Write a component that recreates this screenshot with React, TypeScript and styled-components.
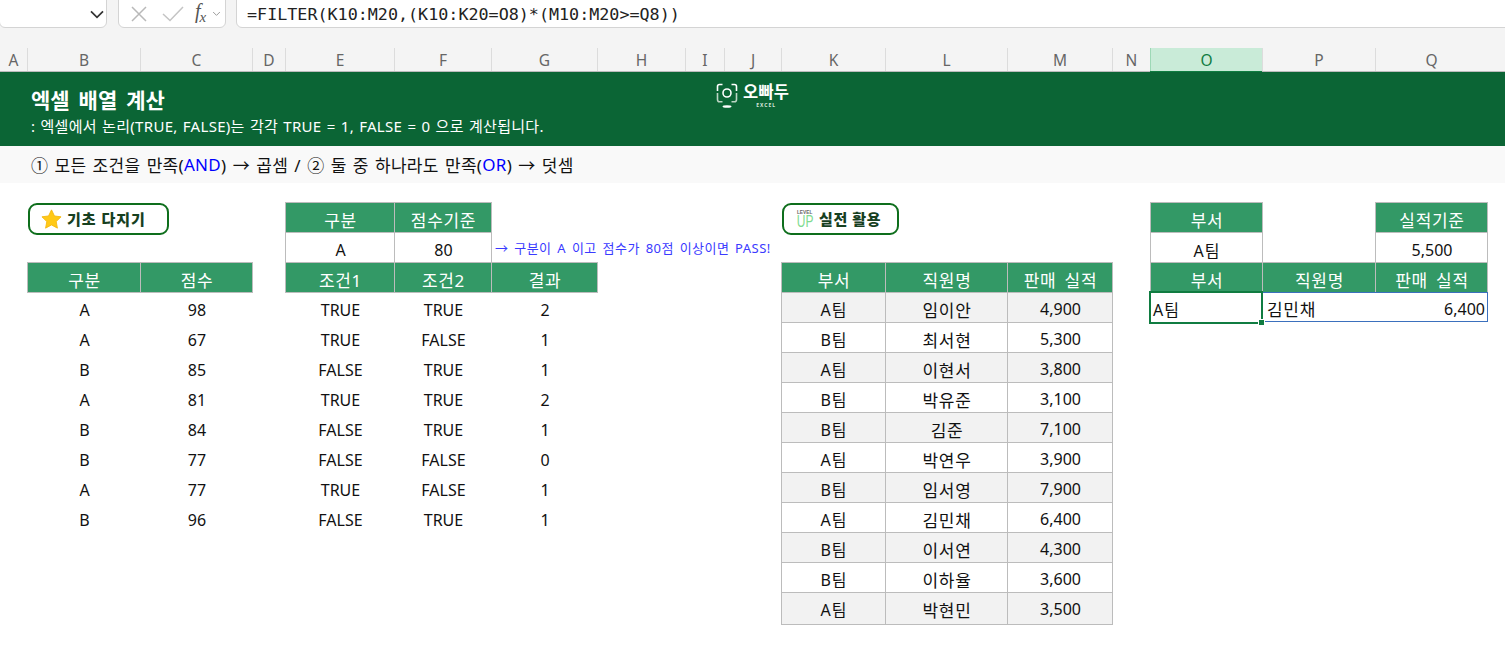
import React from "react";
import styled, { createGlobalStyle, css } from "styled-components";

const SANS = `"Noto Sans", "Noto Sans CJK KR", sans-serif`;
const GRID_COLUMNS = "27px 113px 112px 33px 109px 97px 106px 88px 39px 57px 104px 122px 105px 38px 112px 113px 112px 18px";
const COLUMN_LETTERS = "ABCDEFGHIJKLMNOPQ".split("");

// hangul in the reference runs wider than Noto's, so it gets its own size and tracking
const hangulText = css`
  font-size: 17px;
  letter-spacing: 0.7px;
  word-spacing: 3px;
`;

const GlobalStyle = createGlobalStyle`
  html, body {
    margin: 0;
    padding: 0;
    background: #ffffff;
    overflow: hidden;
    font-family: ${SANS};
  }
`;

const Page = styled.div`
  width: 1505px;
  height: 648px;
  overflow: hidden;
  color: #111;
`;

const FormulaBar = styled.div`
  display: flex;
  height: 48px;
  background: #f4f4f4;
  align-items: flex-start;
`;

const BarBox = styled.div`
  height: 29px;
  margin-top: -1px;
  box-sizing: border-box;
  background: #fff;
  border: 1px solid #d4d4d4;
  border-radius: 0 0 6px 6px;
  display: flex;
  align-items: center;
`;

const NameBox = styled(BarBox)`
  width: 108px;
  margin-left: -1px;
  justify-content: flex-end;
  padding-right: 1px;
`;

const FxBox = styled(BarBox)`
  width: 108px;
  margin-left: 11px;
  padding-left: 11px;
`;

const FormulaInput = styled(BarBox)`
  flex: 1;
  margin-left: 10px;
  margin-right: -8px;
  padding-left: 10px;
  font-family: "DejaVu Sans Mono", monospace;
  font-size: 16.73px;
  color: #222;
  white-space: nowrap;
`;

const FxLabel = styled.span`
  font-family: "Liberation Serif", serif;
  font-style: italic;
  font-size: 20px;
  color: #555;
  margin: -4px 6px 0 11px;
  display: flex;
  align-items: flex-end;
`;

const FxSub = styled.span`
  font-size: 15px;
  margin: 0 0 -3px -1px;
`;

const ColumnHeader = styled.div`
  display: grid;
  grid-template-columns: ${GRID_COLUMNS};
  height: 24px;
  box-sizing: border-box;
  background: #f4f4f4;
  border-bottom: 1px solid #bcbcbc;
`;

const ColumnLabel = styled.div<{ $selected?: boolean; $first?: boolean }>`
  display: flex;
  align-items: center;
  justify-content: center;
  font-size: 15.5px;
  color: ${(p) => (p.$selected ? "#107c41" : "#666")};
  background: ${(p) => (p.$selected ? "#c9ebd8" : "transparent")};
  border-left: ${(p) => (p.$first ? "none" : p.$selected ? "1px solid #9dd8b6" : "1px solid #dcdcdc")};
  box-shadow: ${(p) => (p.$selected ? "0 1px 0 #107c41" : "none")};
  height: 23px;
`;

const Banner = styled.div`
  position: relative;
  height: 74px;
  background: #0b6535;
  color: #fff;
  padding: 13px 0 0 31px;
  box-sizing: border-box;
`;

const BannerTitle = styled.div`
  font-size: 21px;
  font-weight: 700;
  line-height: 30px;
  word-spacing: 3.5px;
`;

const BannerNote = styled.div`
  font-size: 15px;
  line-height: 22px;
  letter-spacing: 0.3px;
  word-spacing: 1px;
  white-space: nowrap;
`;

const Logo = styled.div`
  position: absolute;
  left: 716px;
  top: 11px;
  display: flex;
  gap: 5px;
`;

const LogoWords = styled.div`
  display: flex;
  flex-direction: column;
  align-items: center;
`;

const LogoName = styled.div`
  font-size: 16.5px;
  font-weight: 700;
  line-height: 18px;
  letter-spacing: 0.2px;
`;

const LogoSmall = styled.div`
  font-size: 5px;
  line-height: 8px;
  letter-spacing: 1px;
  font-weight: 700;
  color: #d7e6dc;
`;

const SubBand = styled.div`
  height: 37px;
  background: #f9f9f9;
  display: flex;
  align-items: center;
  padding-left: 31px;
  font-size: 17px;
  letter-spacing: 0.3px;
  word-spacing: 1.5px;
  white-space: pre;
`;

const Blue = styled.span`
  color: #0000ff;
`;

const Sheet = styled.div`
  display: grid;
  grid-template-columns: ${GRID_COLUMNS};
  grid-template-rows: 19px repeat(13, 30px) 32px;
`;

type Place = { $col: number; $row: number; $span?: number };

const Cell = styled.div<Place & { $tone?: "head" | "grey" | "plain"; $ko?: boolean; $team?: boolean; $last?: boolean }>`
  grid-column: ${(p) => p.$col} / span ${(p) => p.$span ?? 1};
  grid-row: ${(p) => p.$row};
  display: flex;
  align-items: center;
  justify-content: center;
  padding: ${(p) => (p.$row === 3 ? "5px" : "3px")} 0 ${(p) => (p.$last ? "2px" : "0")} 1px;
  box-sizing: border-box;
  font-size: 16px;
  letter-spacing: ${(p) => (p.$team ? "1px" : "0")};
  white-space: nowrap;
  border: 1px solid #bcbcbc;
  margin: 0 -1px -1px 0;
  color: ${(p) => (p.$tone === "head" ? "#fff" : "#111")};
  background: ${(p) => (p.$tone === "head" ? "#339966" : p.$tone === "grey" ? "#f2f2f2" : "#fff")};
  ${(p) => (p.$ko || p.$tone === "head") && hangulText}
`;

const DataCell = styled.div<Place>`
  grid-column: ${(p) => p.$col};
  grid-row: ${(p) => p.$row};
  display: flex;
  align-items: center;
  justify-content: center;
  padding: 5px 0 0 2px;
  font-size: 16px;
`;

const Remark = styled.div<Place>`
  grid-column: ${(p) => p.$col} / span 4;
  grid-row: ${(p) => p.$row};
  display: flex;
  align-items: center;
  padding: 1px 0 0 4px;
  font-size: 13px;
  letter-spacing: 0.45px;
  word-spacing: 2px;
  color: #3a3aff;
  white-space: nowrap;
`;

const Badge = styled.div<Place & { $width: number }>`
  grid-column: ${(p) => p.$col} / span 3;
  grid-row: ${(p) => p.$row} / span 2;
  width: ${(p) => p.$width}px;
  height: 32px;
  margin: 1px 0 0 1px;
  padding-bottom: 1px;
  box-sizing: border-box;
  border: 2px solid #0e6e1c;
  border-radius: 9px;
  background: #fff;
  display: flex;
  align-items: center;
  font-size: 15px;
  font-weight: 900;
  color: #17401f;
`;

const StarBadge = styled(Badge)`
  padding-left: 11px;
  gap: 5px;
  letter-spacing: 1px;
`;

const LevelBadge = styled(Badge)`
  padding-left: 13px;
  gap: 6px;
  letter-spacing: 0.6px;
`;

const LevelMark = styled.div`
  display: flex;
  flex-direction: column;
  align-items: center;
  width: 16px;
  line-height: 1;
`;

const LevelTop = styled.span`
  font-family: "Liberation Sans", sans-serif;
  font-size: 6px;
  font-weight: 700;
  color: #666;
  letter-spacing: 0;
  transform: scaleX(0.8);
`;

const LevelUp = styled.span`
  font-family: "Liberation Sans", sans-serif;
  font-size: 16px;
  line-height: 13px;
  font-weight: 400;
  color: #7fdb90;
  letter-spacing: 0;
  transform: scaleX(0.75);
`;

const ActiveCell = styled.div<Place>`
  grid-column: ${(p) => p.$col};
  grid-row: ${(p) => p.$row};
  position: relative;
  z-index: 2;
  margin: -1px -1px -2px -1px;
  border: 2px solid #107c41;
  box-sizing: border-box;
  display: flex;
  align-items: center;
  padding: 3px 0 0 2px;
  font-size: 16px;
  letter-spacing: 1px;
  background: #fff;

  &::after {
    content: "";
    position: absolute;
    right: -4px;
    bottom: -4px;
    width: 5px;
    height: 5px;
    background: #107c41;
    border: 1px solid #fff;
  }
`;

const SpillRange = styled.div<Place>`
  grid-column: ${(p) => p.$col} / span 2;
  grid-row: ${(p) => p.$row};
  position: relative;
  z-index: 1;
  margin: 0 -1px 0 0;
  border: 1px solid #3b70bd;
  box-sizing: border-box;
  display: flex;
  align-items: center;
  justify-content: space-between;
  padding: 3px 2px 0 4px;
  font-size: 16px;
  background: #fff;
`;

const SpillName = styled.span`
  ${hangulText}
`;

const Chevron = ({ size, color }: { size: number; color: string }) => (
  <svg width={size} height={size} viewBox="0 0 12 12" fill="none" style={{ flex: "none" }}>
    <path d="M1.5 4 L6 8.5 L10.5 4" stroke={color} strokeWidth="1.3" />
  </svg>
);

const CrossIcon = () => (
  <svg width="18" height="18" viewBox="0 0 18 18" fill="none" style={{ flex: "none" }}>
    <path d="M2 2 L16 16 M16 2 L2 16" stroke="#b9b9b9" strokeWidth="1.5" />
  </svg>
);

const CheckIcon = () => (
  <svg width="22" height="18" viewBox="0 0 22 18" fill="none" style={{ marginLeft: 14, flex: "none" }}>
    <path d="M1 9 L8 15.5 L21 2" stroke="#c4c4c4" strokeWidth="1.5" />
  </svg>
);

const StarIcon = () => (
  <svg width="21" height="20" viewBox="0 0 24 23">
    <path d="M12 1 L15.4 8 L23 9 L17.4 14.4 L18.8 22 L12 18.3 L5.2 22 L6.6 14.4 L1 9 L8.6 8 Z" fill="#ffc917" stroke="#f5b70e" strokeWidth="1" strokeLinejoin="round" />
  </svg>
);

const LogoMark = () => (
  <svg width="22" height="26" viewBox="0 0 22 26" fill="none">
    <path d="M6.5 1.5 H3.5 Q1.5 1.5 1.5 3.5 V8 M15.5 1.5 H18.5 Q20.5 1.5 20.5 3.5 V8" stroke="#fff" strokeWidth="1.6" />
    <path d="M1.5 10 V16.5 Q1.5 18.8 3.5 18.8 H6.5 M20.5 10 V16.5 Q20.5 18.8 18.5 18.8 H15.5" stroke="#bcd5c4" strokeWidth="1.6" />
    <circle cx="11" cy="10" r="4" stroke="#fff" strokeWidth="1.6" />
    <ellipse cx="11" cy="23.5" rx="4.5" ry="1.3" fill="#fff" />
  </svg>
);

const basicRows = [
  ["A", "98", "TRUE", "TRUE", "2"],
  ["A", "67", "TRUE", "FALSE", "1"],
  ["B", "85", "FALSE", "TRUE", "1"],
  ["A", "81", "TRUE", "TRUE", "2"],
  ["B", "84", "FALSE", "TRUE", "1"],
  ["B", "77", "FALSE", "FALSE", "0"],
  ["A", "77", "TRUE", "FALSE", "1"],
  ["B", "96", "FALSE", "TRUE", "1"],
];
const basicCols = [2, 3, 5, 6, 7];

const salesRows = [
  ["A팀", "임이안", "4,900"],
  ["B팀", "최서현", "5,300"],
  ["A팀", "이현서", "3,800"],
  ["B팀", "박유준", "3,100"],
  ["B팀", "김준", "7,100"],
  ["A팀", "박연우", "3,900"],
  ["B팀", "임서영", "7,900"],
  ["A팀", "김민채", "6,400"],
  ["B팀", "이서연", "4,300"],
  ["B팀", "이하율", "3,600"],
  ["A팀", "박현민", "3,500"],
];

export default function App() {
  return (
    <Page>
      <GlobalStyle />
      <FormulaBar>
        <NameBox>
          <Chevron size={16} color="#333" />
        </NameBox>
        <FxBox>
          <CrossIcon />
          <CheckIcon />
          <FxLabel>
            f<FxSub>x</FxSub>
          </FxLabel>
          <Chevron size={9} color="#999" />
        </FxBox>
        <FormulaInput>=FILTER(K10:M20,(K10:K20=O8)*(M10:M20&gt;=Q8))</FormulaInput>
      </FormulaBar>

      <ColumnHeader>
        {COLUMN_LETTERS.map((letter, i) => (
          <ColumnLabel key={letter} $first={i === 0} $selected={letter === "O"}>
            {letter}
          </ColumnLabel>
        ))}
      </ColumnHeader>

      <Banner>
        <BannerTitle>엑셀 배열 계산</BannerTitle>
        <BannerNote>: 엑셀에서 논리(TRUE, FALSE)는 각각 TRUE = 1, FALSE = 0 으로 계산됩니다.</BannerNote>
        <Logo>
          <LogoMark />
          <LogoWords>
            <LogoName>오빠두</LogoName>
            <LogoSmall>EXCEL</LogoSmall>
          </LogoWords>
        </Logo>
      </Banner>

      <SubBand>
        ① 모든 조건을 만족(<Blue>AND</Blue>) → 곱셈 / ② 둘 중 하나라도 만족(<Blue>OR</Blue>) → 덧셈
      </SubBand>

      <Sheet>
        <StarBadge $col={2} $row={2} $width={141}>
          <StarIcon />
          기초 다지기
        </StarBadge>
        <LevelBadge $col={11} $row={2} $width={117}>
          <LevelMark>
            <LevelTop>LEVEL</LevelTop>
            <LevelUp>UP</LevelUp>
          </LevelMark>
          실전 활용
        </LevelBadge>

        <Cell $col={2} $row={4} $tone="head">구분</Cell>
        <Cell $col={3} $row={4} $tone="head">점수</Cell>

        <Cell $col={5} $row={2} $tone="head">구분</Cell>
        <Cell $col={6} $row={2} $tone="head">점수기준</Cell>
        <Cell $col={5} $row={3}>A</Cell>
        <Cell $col={6} $row={3}>80</Cell>
        <Remark $col={7} $row={3}>→ 구분이 A 이고 점수가 80점 이상이면 PASS!</Remark>
        <Cell $col={5} $row={4} $tone="head">조건1</Cell>
        <Cell $col={6} $row={4} $tone="head">조건2</Cell>
        <Cell $col={7} $row={4} $tone="head">결과</Cell>

        {basicRows.map((row, r) =>
          row.map((value, c) => (
            <DataCell key={`${r}-${c}`} $col={basicCols[c]} $row={r + 5}>
              {value}
            </DataCell>
          ))
        )}

        <Cell $col={11} $row={4} $tone="head">부서</Cell>
        <Cell $col={12} $row={4} $tone="head">직원명</Cell>
        <Cell $col={13} $row={4} $tone="head">판매 실적</Cell>
        {salesRows.map((row, r) =>
          row.map((value, c) => (
            <Cell
              key={`${r}-${c}`}
              $col={11 + c}
              $row={r + 5}
              $tone={r % 2 === 0 ? "grey" : "plain"}
              $team={c === 0}
              $ko={c === 1}
              $last={r === salesRows.length - 1}
            >
              {value}
            </Cell>
          ))
        )}

        <Cell $col={15} $row={2} $tone="head">부서</Cell>
        <Cell $col={17} $row={2} $tone="head">실적기준</Cell>
        <Cell $col={15} $row={3} $team>A팀</Cell>
        <Cell $col={17} $row={3}>5,500</Cell>
        <Cell $col={15} $row={4} $tone="head">부서</Cell>
        <Cell $col={16} $row={4} $tone="head">직원명</Cell>
        <Cell $col={17} $row={4} $tone="head">판매 실적</Cell>
        <ActiveCell $col={15} $row={5}>A팀</ActiveCell>
        <SpillRange $col={16} $row={5}>
          <SpillName>김민채</SpillName>
          <span>6,400</span>
        </SpillRange>
      </Sheet>
    </Page>
  );
}
